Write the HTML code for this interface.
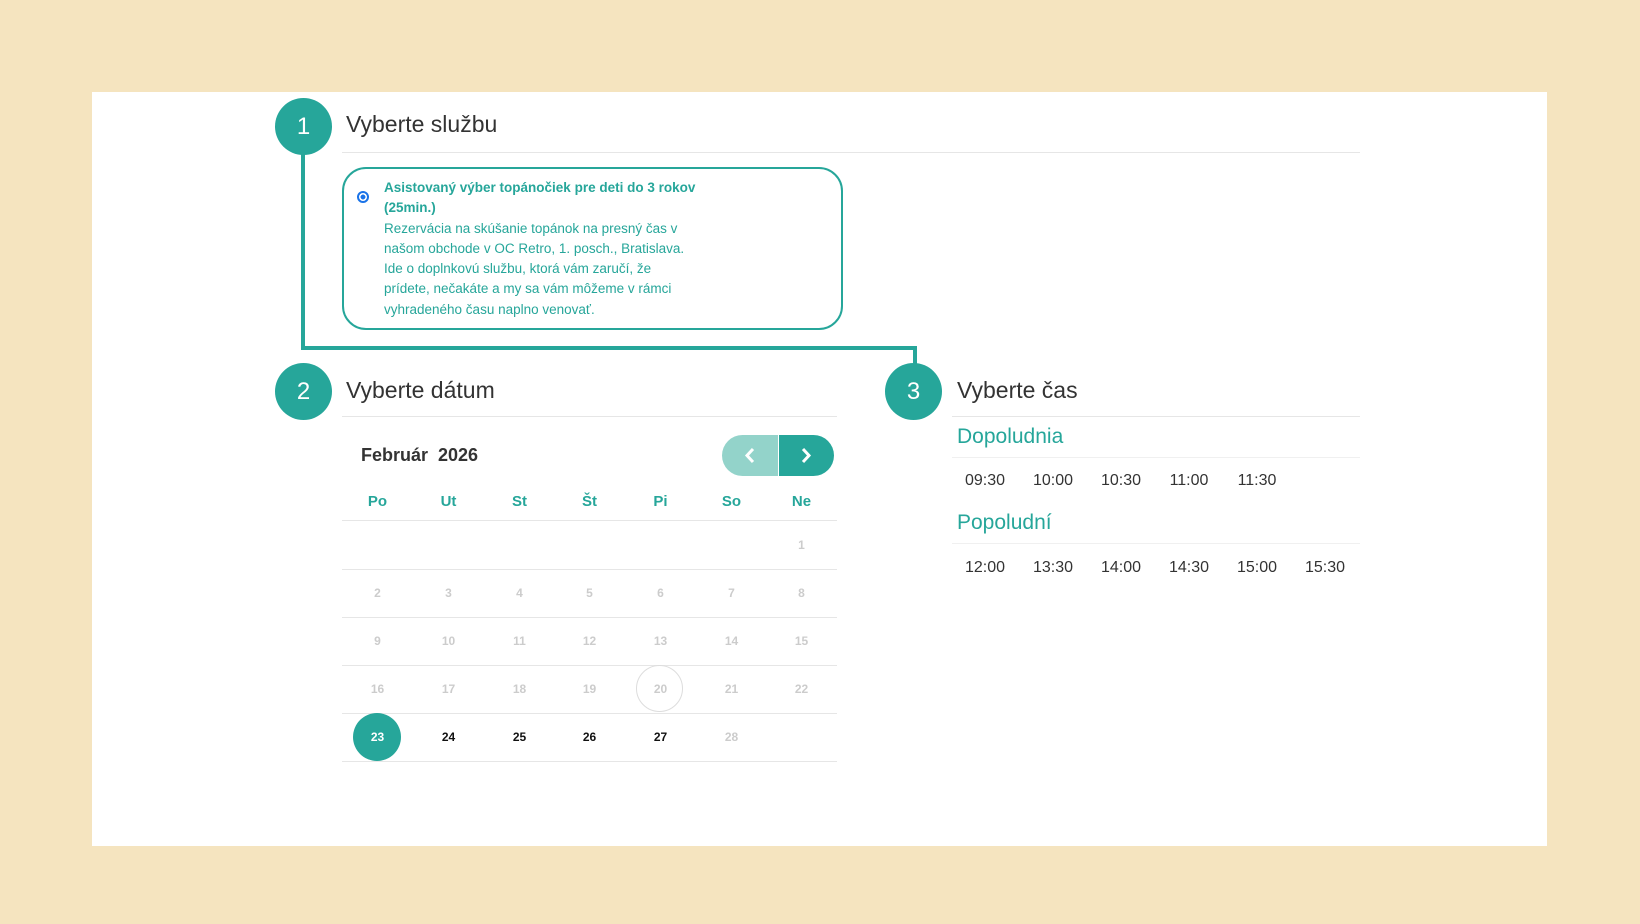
<!DOCTYPE html><html><head><meta charset="utf-8"><style>
*{margin:0;padding:0;box-sizing:border-box}
body{width:1640px;height:924px;background:#f5e4bf;font-family:"Liberation Sans",sans-serif;position:relative;overflow:hidden}
.panel{position:absolute;left:92px;top:92px;width:1455px;height:754px;background:#fff}
.a{position:absolute}
.c{position:absolute;width:57px;height:57px;border-radius:50%;background:#26a69a;color:#fff;font-size:24px;display:flex;align-items:center;justify-content:center}
.h{position:absolute;font-size:23px;color:#333}
.ln{position:absolute;height:1px;background:#e6e6e6}
.t{color:#26a69a}
.wd{position:absolute;width:71px;text-align:center;font-weight:bold;color:#26a69a;font-size:15px}
.d{position:absolute;width:71px;text-align:center;font-size:12px;font-weight:bold;color:#ccc}
.d.b{color:#111}
.tm{position:absolute;width:60px;text-align:center;font-size:16px;color:#333}
</style></head><body>
<div class="panel"></div>
<div class="a" style="left:301px;top:126px;width:4px;height:224px;background:#26a69a"></div>
<div class="a" style="left:301px;top:346px;width:616px;height:4px;background:#26a69a"></div>
<div class="a" style="left:913px;top:346px;width:4px;height:40px;background:#26a69a"></div>
<div class="c" style="left:275px;top:98px">1</div>
<div class="c" style="left:275px;top:363px">2</div>
<div class="c" style="left:885px;top:363px">3</div>
<div class="h" style="left:346px;top:111px">Vyberte službu</div>
<div class="h" style="left:346px;top:377px">Vyberte dátum</div>
<div class="h" style="left:957px;top:377px">Vyberte čas</div>
<div class="ln" style="left:342px;top:152px;width:1018px"></div>
<div class="ln" style="left:342px;top:416px;width:495px"></div>
<div class="ln" style="left:952px;top:416px;width:408px"></div>
<div class="a" style="left:342px;top:167px;width:501px;height:163px;border:2px solid #26a69a;border-radius:24px"></div>
<div class="a" style="left:357px;top:191px;width:12px;height:12px;border-radius:50%;border:2px solid #1a73e8;background:radial-gradient(#1a73e8 40%,#fff 45%)"></div>
<div class="a t" style="left:384px;top:178px;width:400px;font-size:13.5px;line-height:20.3px;white-space:nowrap"><b>Asistovaný výber topánočiek pre deti do 3 rokov<br>(25min.)</b><br>Rezervácia na skúšanie topánok na presný čas v<br>našom obchode v OC Retro, 1. posch., Bratislava.<br>Ide o doplnkovú službu, ktorá vám zaručí, že<br>prídete, nečakáte a my sa vám môžeme v rámci<br>vyhradeného času naplno venovať.</div>
<div class="a" style="left:361px;top:445px;font-size:18px;font-weight:bold;color:#333">Február&nbsp; 2026</div>
<div class="a" style="left:722px;top:435px;width:56px;height:41px;background:#93d3ca;border-radius:21px 0 0 21px"><svg width="56" height="41"><path d="M31 14 L25 20.5 L31 27" stroke="#fff" stroke-width="3" fill="none"/></svg></div>
<div class="a" style="left:779px;top:435px;width:55px;height:41px;background:#26a69a;border-radius:0 21px 21px 0"><svg width="55" height="41"><path d="M24 14 L30 20.5 L24 27" stroke="#fff" stroke-width="3" fill="none"/></svg></div>
<div class="wd" style="left:342px;top:493px">Po</div><div class="wd" style="left:413px;top:493px">Ut</div><div class="wd" style="left:484px;top:493px">St</div><div class="wd" style="left:554px;top:493px">Št</div><div class="wd" style="left:625px;top:493px">Pi</div><div class="wd" style="left:696px;top:493px">So</div><div class="wd" style="left:766px;top:493px">Ne</div>
<div class="ln" style="left:342px;top:520px;width:495px"></div><div class="ln" style="left:342px;top:569px;width:495px"></div><div class="ln" style="left:342px;top:617px;width:495px"></div><div class="ln" style="left:342px;top:665px;width:495px"></div><div class="ln" style="left:342px;top:713px;width:495px"></div><div class="ln" style="left:342px;top:761px;width:495px"></div>
<div class="a" style="left:636px;top:665px;width:47px;height:47px;border-radius:50%;border:1px solid #ddd"></div>
<div class="a" style="left:353px;top:713px;width:48px;height:48px;border-radius:50%;background:#26a69a"></div>
<div class="d" style="left:766px;top:538px">1</div>
<div class="d" style="left:342px;top:586px">2</div><div class="d" style="left:413px;top:586px">3</div><div class="d" style="left:484px;top:586px">4</div><div class="d" style="left:554px;top:586px">5</div><div class="d" style="left:625px;top:586px">6</div><div class="d" style="left:696px;top:586px">7</div><div class="d" style="left:766px;top:586px">8</div>
<div class="d" style="left:342px;top:634px">9</div><div class="d" style="left:413px;top:634px">10</div><div class="d" style="left:484px;top:634px">11</div><div class="d" style="left:554px;top:634px">12</div><div class="d" style="left:625px;top:634px">13</div><div class="d" style="left:696px;top:634px">14</div><div class="d" style="left:766px;top:634px">15</div>
<div class="d" style="left:342px;top:682px">16</div><div class="d" style="left:413px;top:682px">17</div><div class="d" style="left:484px;top:682px">18</div><div class="d" style="left:554px;top:682px">19</div><div class="d" style="left:625px;top:682px">20</div><div class="d" style="left:696px;top:682px">21</div><div class="d" style="left:766px;top:682px">22</div>
<div class="d" style="left:342px;top:730px;color:#fff">23</div><div class="d b" style="left:413px;top:730px">24</div><div class="d b" style="left:484px;top:730px">25</div><div class="d b" style="left:554px;top:730px">26</div><div class="d b" style="left:625px;top:730px">27</div><div class="d" style="left:696px;top:730px">28</div>
<div class="a t" style="left:957px;top:425px;font-size:21px">Dopoludnia</div>
<div class="ln" style="left:952px;top:457px;width:408px;background:#f0f0f0"></div>
<div class="tm" style="left:955px;top:472px">09:30</div><div class="tm" style="left:1023px;top:472px">10:00</div><div class="tm" style="left:1091px;top:472px">10:30</div><div class="tm" style="left:1159px;top:472px">11:00</div><div class="tm" style="left:1227px;top:472px">11:30</div>
<div class="a t" style="left:957px;top:511px;font-size:21px">Popoludní</div>
<div class="ln" style="left:952px;top:543px;width:408px;background:#f0f0f0"></div>
<div class="tm" style="left:955px;top:559px">12:00</div><div class="tm" style="left:1023px;top:559px">13:30</div><div class="tm" style="left:1091px;top:559px">14:00</div><div class="tm" style="left:1159px;top:559px">14:30</div><div class="tm" style="left:1227px;top:559px">15:00</div><div class="tm" style="left:1295px;top:559px">15:30</div>
</body></html>
